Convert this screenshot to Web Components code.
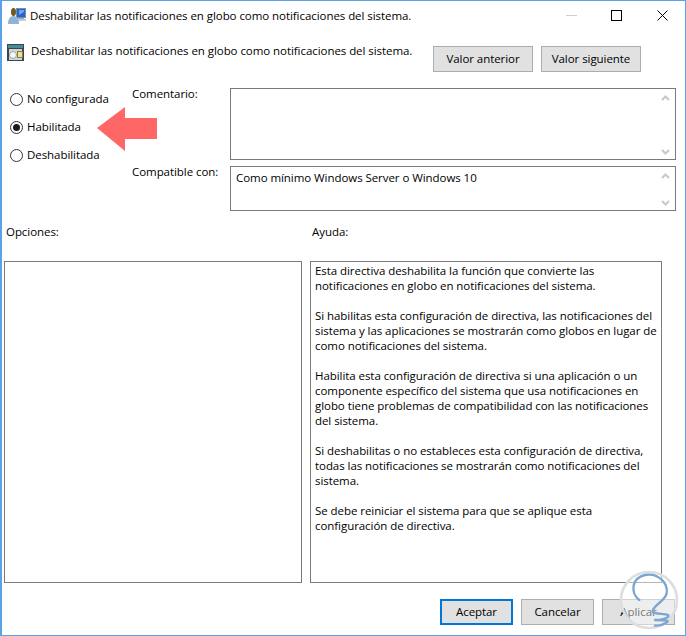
<!DOCTYPE html>
<html lang="es">
<head>
<meta charset="utf-8">
<title>Deshabilitar las notificaciones</title>
<style>
  html, body { margin: 0; padding: 0; background: #fff; }
</style>
</head>
<body>
<policy-dialog></policy-dialog>

<template id="dlg-button-tpl">
  <style>
    :host {
      display: flex;
      align-items: center;
      justify-content: center;
      box-sizing: border-box;
      width: var(--w, 73px);
      height: 26px;
      background: #e1e1e1;
      border: 1px solid #adadad;
      color: #000;
    }
    :host([default]) { border: 2px solid #0078d7; }
  </style>
  <slot></slot>
</template>

<template id="dlg-radio-tpl">
  <style>
    :host { display: flex; align-items: center; height: 14px; gap: 4px; padding-left: 8px; }
    .dot {
      box-sizing: border-box; width: 13px; height: 13px; border-radius: 50%;
      border: 1px solid #333; background: #fff; display: flex; align-items: center; justify-content: center;
    }
    :host([checked]) .dot::after { content: ""; width: 7px; height: 7px; border-radius: 50%; background: #1a1a1a; }
  </style>
  <span class="dot"></span><slot></slot>
</template>

<template id="text-box-tpl">
  <style>
    :host {
      display: flex; box-sizing: border-box;
      border: 1px solid #7a7a7a; background: #fff; min-width: 0;
      height: var(--h, auto);
    }
    .text { flex: 1; padding: var(--pad, 1px 4px); line-height: 15px; white-space: nowrap; }
    .arrows {
      width: 17px; margin-right: 1px; padding: 6px 0 4px; display: flex; flex-direction: column;
      justify-content: space-between; align-items: center;
    }
    svg { display: block; width: 9px; height: 6px; fill: none; stroke: #c8c8c8; stroke-width: 2; }
    :host([plain]) .arrows { display: none; }
  </style>
  <div class="text"><slot></slot></div>
  <div class="arrows">
    <svg viewBox="0 0 9 6"><path d="M1 5l3.5-3.5L8 5"/></svg>
    <svg viewBox="0 0 9 6"><path d="M1 1l3.5 3.5L8 1"/></svg>
  </div>
</template>

<template id="title-bar-tpl">
  <style>
    :host { display: flex; align-items: center; height: 29px; padding-left: 6px; }
    .name { flex: 1; margin-left: 4px; }
    svg { display: block; }
    .caption { display: flex; }
    .caption span { display: flex; width: 45px; justify-content: center; }
    .caption span:nth-child(2) { margin-right: 1px; }
  </style>
  <slot name="icon"></slot>
  <span class="name"><slot></slot></span>
  <div class="caption">
    <span><svg width="11" height="11" viewBox="0 0 11 11"><path d="M0 5.5h11" stroke="#cfcfcf"/></svg></span>
    <span><svg width="11" height="11" viewBox="0 0 11 11"><rect x=".5" y=".5" width="10" height="10" fill="none" stroke="#000"/></svg></span>
    <span><svg width="11" height="11" viewBox="0 0 11 11"><path d="M.5.5l10 10M10.500.5l-10 10" stroke="#000" fill="none"/></svg></span>
  </div>
</template>

<template id="policy-dialog-tpl">
  <style>
    :host {
      display: flex; flex-direction: column; box-sizing: border-box;
      width: 686px; height: 636px; position: relative; overflow: hidden;
      border: 1px solid #5ba3e6; border-left-width: 2px;
      background: #fff; color: #000;
      font: 11.5px/16px "Open Sans", sans-serif;
      letter-spacing: -0.06px;
    }
    .head { display: flex; align-items: flex-start; margin-top: 14px; padding-left: 5px; }
    .head .name { flex: 1; margin-left: 7px; margin-top: -1px; }
    .head .btns { display: flex; gap: 8px; padding-right: 44px; margin-top: 2px; --w: 100px; }
    .form {
      display: grid; grid-template-columns: 130px 98px 446px; grid-template-rows: 72px 45px;
      row-gap: 6px; margin-top: 16px;
    }
    .radios { grid-row: 1 / 3; display: flex; flex-direction: column; gap: 14px; padding-top: 4px; }
    .label { line-height: 12px; }
    .compat { --pad: 3px 5px; }
    .captions { display: grid; grid-template-columns: 306px 1fr; margin-top: 13px; padding-left: 4px; }
    .panes { display: grid; grid-template-columns: 298px 352px; column-gap: 8px; margin-top: 21px; padding-left: 2px; --h: 322px; }
    .foot { display: flex; justify-content: flex-end; gap: 8px; margin-top: 16px; padding-right: 10px; }
    .arrow { position: absolute; left: 93px; top: 105px; }
    .mark { position: absolute; left: 608px; top: 564px; }
  </style>
  <title-bar>
    <svg slot="icon" width="18" height="18" viewBox="2 0 18 18">
      <rect x="10.5" y="1.5" width="9" height="9" fill="#2563cf" stroke="#7b8ea8"/>
      <path d="M13 3l5 0 0 2-5 3z" fill="#6fa6ec"/>
      <rect x="12" y="11" width="6" height="1" fill="#99a7b5"/>
      <path d="M10 13h10" stroke="#c3ccd6" stroke-width="2"/>
      <ellipse cx="7.5" cy="5" rx="2.5" ry="4" fill="#6e5a26"/>
      <path d="M2 17c0-5 2-8 5.500-8s5.500 3 5.500 8z" fill="#8fb3d6"/>
    </svg>
    Deshabilitar las notificaciones en globo como notificaciones del sistema.
  </title-bar>
  <div class="head">
    <svg width="17" height="17" viewBox="0 0 17 17">
      <rect width="17" height="17" fill="#39464e"/>
      <rect x="1" y="1" width="15" height="3" fill="#4a8a96"/>
      <rect x="2" y="5" width="13" height="11" fill="#cfd6d8"/>
      <circle cx="6" cy="11" r="3.500" fill="#f4f4f4" stroke="#9aa7ab"/>
      <rect x="10.500" y="7.500" width="5" height="6" fill="#eadf9f" stroke="#8a7d3a"/>
    </svg>
    <span class="name">Deshabilitar las notificaciones en globo como notificaciones del sistema.</span>
    <div class="btns">
      <dlg-button>Valor anterior</dlg-button>
      <dlg-button>Valor siguiente</dlg-button>
    </div>
  </div>
  <div class="form">
    <div class="radios">
      <dlg-radio>No configurada</dlg-radio>
      <dlg-radio checked>Habilitada</dlg-radio>
      <dlg-radio>Deshabilitada</dlg-radio>
    </div>
    <span class="label">Comentario:</span>
    <text-box></text-box>
    <span class="label">Compatible con:</span>
    <text-box class="compat">Como mínimo Windows Server o Windows 10</text-box>
  </div>
  <div class="captions"><span>Opciones:</span><span>Ayuda:</span></div>
  <div class="panes">
    <text-box plain></text-box>
    <text-box plain>Esta directiva deshabilita la función que convierte las<br>
notificaciones en globo en notificaciones del sistema.<br><br>
Si habilitas esta configuración de directiva, las notificaciones del<br>
sistema y las aplicaciones se mostrarán como globos en lugar de<br>
como notificaciones del sistema.<br><br>
Habilita esta configuración de directiva si una aplicación o un<br>
componente específico del sistema que usa notificaciones en<br>
globo tiene problemas de compatibilidad con las notificaciones<br>
del sistema.<br><br>
Si deshabilitas o no estableces esta configuración de directiva,<br>
todas las notificaciones se mostrarán como notificaciones del<br>
sistema.<br><br>
Se debe reiniciar el sistema para que se aplique esta<br>
configuración de directiva.</text-box>
  </div>
  <div class="foot">
    <dlg-button default>Aceptar</dlg-button>
    <dlg-button>Cancelar</dlg-button>
    <dlg-button>Aplicar</dlg-button>
  </div>
  <svg class="arrow" width="64" height="48" viewBox="0 0 64 48"><path d="M2 22L30 1v11h32v21H30v12z" fill="#ff6666"/></svg>
  <svg class="mark" width="76" height="71" viewBox="0 0 228 213" fill="none">
    <circle cx="117" cy="105" r="84" fill="#fff" fill-opacity=".45" stroke="#dcdfe2" stroke-width="8"/>
    <path d="M88 105C62 85 62 40 105 30c40-8 70 25 65 55-5 25-35 30-42 53 0 10 32 7 47 12 5 10-25 15-40 15 30 0 45 0 35 7-10 8-25 10-35 10" stroke="#7ba6d0" stroke-width="7" stroke-linecap="round" stroke-linejoin="round"/>
  </svg>
</template>

<script>
  // every element is the same: clone its template into an open shadow root
  function define(tag, tplId) {
    const template = document.getElementById(tplId);
    customElements.define(tag, class extends HTMLElement {
      constructor() {
        super();
        this.attachShadow({ mode: "open" }).appendChild(template.content.cloneNode(true));
      }
    });
  }
  define("dlg-button", "dlg-button-tpl");
  define("dlg-radio", "dlg-radio-tpl");
  define("text-box", "text-box-tpl");
  define("title-bar", "title-bar-tpl");
  define("policy-dialog", "policy-dialog-tpl");
</script>
</body>
</html>
